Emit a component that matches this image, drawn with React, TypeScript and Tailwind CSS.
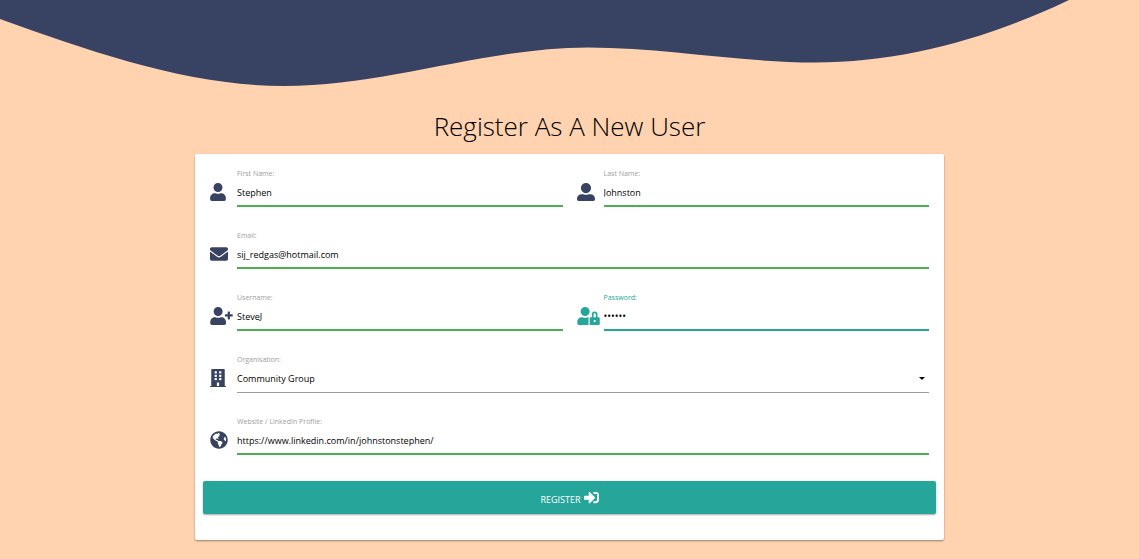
import type { ReactNode } from "react";
import {
  FaBuilding,
  FaEnvelope,
  FaGlobeAmericas,
  FaSignInAlt,
  FaUser,
  FaUserAlt,
  FaUserLock,
  FaUserPlus,
} from "react-icons/fa";

const narrowIcon = "h-[18px] w-4 shrink-0";
const squareIcon = "size-[18px] shrink-0";
const wideIcon = "h-[18px] w-[23px] shrink-0";

type FieldProps = {
  id: string;
  label: string;
  icon: ReactNode;
  active?: boolean;
  children: ReactNode;
};

function Field({ id, label, icon, active = false, children }: FieldProps) {
  return (
    <div className="grid grid-cols-[27px_minmax(0,1fr)]">
      <label
        htmlFor={id}
        className={`col-start-2 h-3 text-[7px] leading-[14px] ${active ? "text-[#26a69a]" : "text-[#9e9e9e]"}`}
      >
        {label}
      </label>
      <span
        className={`col-start-1 row-start-2 flex items-center pb-0.5 ${active ? "text-[#26a69a]" : "text-[#384262]"}`}
        aria-hidden="true"
      >
        {icon}
      </span>
      <div className="relative col-start-2 row-start-2 flex">{children}</div>
    </div>
  );
}

type TextFieldProps = {
  id: string;
  label: string;
  icon: ReactNode;
  value: string;
  type?: string;
  active?: boolean;
};

function TextField({ id, label, icon, value, type = "text", active = false }: TextFieldProps) {
  return (
    <Field id={id} label={label} icon={icon} active={active}>
      <input
        id={id}
        type={type}
        defaultValue={value}
        className={`h-7 w-full border-b-2 bg-transparent text-black outline-none ${
          type === "password" ? "text-[10px]" : "text-[9px]"
        } ${active ? "border-[#26a69a]" : "border-[#4caf50]"}`}
      />
    </Field>
  );
}

export default function App() {
  return (
    <div className="min-h-screen bg-[#ffd3b0] font-['Open_Sans','Noto_Sans',sans-serif] text-[#111]">
      <svg viewBox="0 0 1139 88" className="block h-auto w-full" aria-hidden="true">
        <path
          fill="#384262"
          d="M0 0V19C95 53 190 86 284 86C386 86 486 47.5 588 47.5C665 47.5 738 62.5 815 62.5C900 62.5 985 40 1069 0Z"
        />
      </svg>
      <main className="mx-auto w-full max-w-[749px] pt-5 pb-4">
        <h1 className="text-center text-[26px] leading-9 font-[340] text-black">Register As A New User</h1>
        <form
          className="mt-2.5 rounded-[2px] bg-white px-2 pt-[13px] pb-[26px] shadow-[0_1px_2px_rgba(0,0,0,0.4)]"
          onSubmit={(event) => event.preventDefault()}
        >
          <div className="grid gap-[22px] px-[7px]">
            <div className="grid grid-cols-2 gap-3.5">
              <TextField id="first-name" label="First Name:" value="Stephen" icon={<FaUser className={narrowIcon} />} />
              <TextField id="last-name" label="Last Name:" value="Johnston" icon={<FaUserAlt className={squareIcon} />} />
            </div>
            <TextField
              id="email"
              label="Email:"
              type="email"
              value="sij_redgas@hotmail.com"
              icon={<FaEnvelope className={squareIcon} />}
            />
            <div className="grid grid-cols-2 gap-3.5">
              <TextField id="username" label="Username:" value="SteveJ" icon={<FaUserPlus className={wideIcon} />} />
              <TextField
                id="password"
                label="Password:"
                type="password"
                value="secret"
                active
                icon={<FaUserLock className={wideIcon} />}
              />
            </div>
            <Field id="organisation" label="Organisation:" icon={<FaBuilding className={narrowIcon} />}>
              <select
                id="organisation"
                className="h-7 w-full appearance-none border-b border-[#9e9e9e] bg-transparent text-[9px] text-black outline-none"
              >
                <option>Community Group</option>
              </select>
              <svg
                viewBox="0 0 6 3"
                className="pointer-events-none absolute top-3 right-1 h-[3px] w-1.5"
                aria-hidden="true"
              >
                <path d="M0 0H6L3 3Z" />
              </svg>
            </Field>
            <TextField
              id="website"
              label="Website / LinkedIn Profile:"
              value="https://www.linkedin.com/in/johnstonstephen/"
              icon={<FaGlobeAmericas className={squareIcon} />}
            />
          </div>
          <button
            type="submit"
            className="mt-[26px] flex h-[33px] w-full items-center justify-center gap-[3px] rounded-[2px] bg-[#26a69a] text-[9px] text-white shadow-[0_1px_2px_rgba(0,0,0,0.35)]"
          >
            <span className="pt-1">REGISTER</span>
            <FaSignInAlt className="size-[15px]" aria-hidden="true" />
          </button>
        </form>
      </main>
    </div>
  );
}
